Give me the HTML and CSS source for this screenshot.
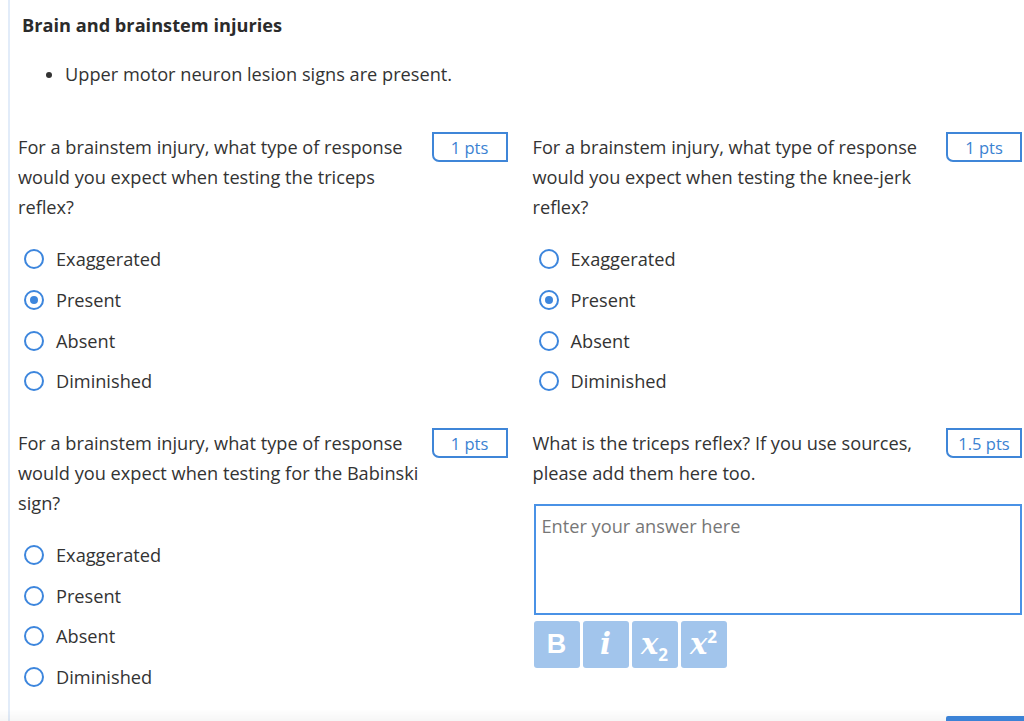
FILE: index.html
```html
<!DOCTYPE html>
<html lang="en">
<head>
<meta charset="utf-8">
<title>Brain and brainstem injuries</title>
<link rel="stylesheet" href="styles.css">
</head>
<body>
<div class="page">
  <div class="stimulus">
    <h2 class="title">Brain and brainstem injuries</h2>
    <ul class="bullets">
      <li>Upper motor neuron lesion signs are present.</li>
    </ul>
  </div>
  <div class="grid">
    <div class="question">
      <div class="qhead">
        <p class="qtext">For a brainstem injury, what type of response would you expect when testing the triceps reflex?</p>
        <span class="pts">1 pts</span>
      </div>
      <ul class="options">
        <li><span class="radio"></span>Exaggerated</li>
        <li><span class="radio checked"></span>Present</li>
        <li><span class="radio"></span>Absent</li>
        <li><span class="radio"></span>Diminished</li>
      </ul>
    </div>
    <div class="question">
      <div class="qhead">
        <p class="qtext">For a brainstem injury, what type of response would you expect when testing the knee-jerk reflex?</p>
        <span class="pts">1 pts</span>
      </div>
      <ul class="options">
        <li><span class="radio"></span>Exaggerated</li>
        <li><span class="radio checked"></span>Present</li>
        <li><span class="radio"></span>Absent</li>
        <li><span class="radio"></span>Diminished</li>
      </ul>
    </div>
    <div class="question">
      <div class="qhead">
        <p class="qtext">For a brainstem injury, what type of response would you expect when testing for the Babinski sign?</p>
        <span class="pts">1 pts</span>
      </div>
      <ul class="options">
        <li><span class="radio"></span>Exaggerated</li>
        <li><span class="radio"></span>Present</li>
        <li><span class="radio"></span>Absent</li>
        <li><span class="radio"></span>Diminished</li>
      </ul>
    </div>
    <div class="question">
      <div class="qhead">
        <p class="qtext">What is the triceps reflex? If you use sources, please add them here too.</p>
        <span class="pts">1.5 pts</span>
      </div>
      <div class="answer">Enter your answer here</div>
      <div class="toolbar">
        <span class="tbtn bold"><span>B</span></span>
        <span class="tbtn serif"><span>i</span></span>
        <span class="tbtn serif"><span>x<sub>2</sub></span></span>
        <span class="tbtn serif"><span>x<sup>2</sup></span></span>
      </div>
    </div>
  </div>
</div>
<div class="footer"><span class="footbtn"></span></div>
</body>
</html>
```

FILE: styles.css
```css
* { box-sizing: border-box; }
html, body { margin: 0; padding: 0; background: #fff; }
body {
  font-family: "Open Sans", "Noto Sans", "Liberation Sans", sans-serif;
  color: #333;
  font-size: 18.2px;
  overflow: hidden;
  height: 721px;
}
.page {
  margin-left: 8px;
  border-left: 2px solid #e2ecf9;
  min-height: 721px;
  padding-right: 2px;
}
.stimulus { padding: 11px 0 0 12px; }
.title {
  margin: 0;
  font-size: 18.2px;
  font-weight: 700;
  line-height: 28px;
  color: #2b2b2b;
}
.bullets {
  margin: 20px 0 0 0;
  padding-left: 43px;
  line-height: 30px;
}
.grid {
  display: grid;
  grid-template-columns: 1fr 1fr;
  column-gap: 25px;
  row-gap: 26px;
  padding: 43px 0 0 8px;
}
.qhead {
  display: flex;
  align-items: flex-start;
  gap: 8px;
}
.qtext {
  flex: 1;
  margin: 0;
  line-height: 30px;
}
.pts {
  flex: none;
  width: 76px;
  height: 30px;
  border: 2px solid #3f86d8;
  border-radius: 0 0 0 7px;
  color: #3b82d2;
  font-size: 16.5px;
  line-height: 27px;
  text-align: center;
}
.options {
  list-style: none;
  margin: 17px 0 0 0;
  padding: 0;
}
.options li {
  display: flex;
  align-items: center;
  height: 40.7px;
}
.radio {
  width: 20px;
  height: 20px;
  border: 2.5px solid #3d86dd;
  border-radius: 50%;
  margin: 0 12px 0 6px;
  display: flex;
  align-items: center;
  justify-content: center;
}
.radio.checked::after {
  content: "";
  width: 8px;
  height: 8px;
  border-radius: 50%;
  background: #3d86dd;
}
.answer {
  margin: 16px 0 0 1px;
  height: 111px;
  border: 2px solid #4a92e6;
  padding: 5px 6px;
  color: #777;
  line-height: 30px;
}
.toolbar {
  display: flex;
  gap: 3px;
  margin: 6px 0 0 1px;
}
.tbtn {
  width: 46px;
  height: 47px;
  background: #a2c5ec;
  border-radius: 3px;
  color: #fff;
  display: flex;
  align-items: center;
  justify-content: center;
}
.tbtn.bold {
  font-family: "Liberation Sans", Arial, sans-serif;
  font-weight: 700;
  font-size: 27px;
}
.tbtn.serif {
  font-family: "DejaVu Serif", "Liberation Serif", serif;
  font-style: italic;
  font-weight: 700;
  font-size: 29px;
  line-height: 1;
}
.tbtn sub, .tbtn sup {
  font-family: "Open Sans", sans-serif;
  font-style: normal;
  font-size: 17px;
  font-weight: 700;
  line-height: 0;
}
.tbtn sub { vertical-align: -7px; }
.tbtn sup { vertical-align: 11px; }
.footer {
  position: fixed;
  left: 0;
  right: 0;
  bottom: 0;
  height: 12px;
  background: linear-gradient(to bottom, rgba(0,0,0,0), rgba(0,0,0,0.035));
}
.footbtn {
  position: absolute;
  right: 0;
  bottom: 0;
  width: 78px;
  height: 5px;
  background: #3b82d6;
  border-radius: 2px 0 0 0;
}
```
